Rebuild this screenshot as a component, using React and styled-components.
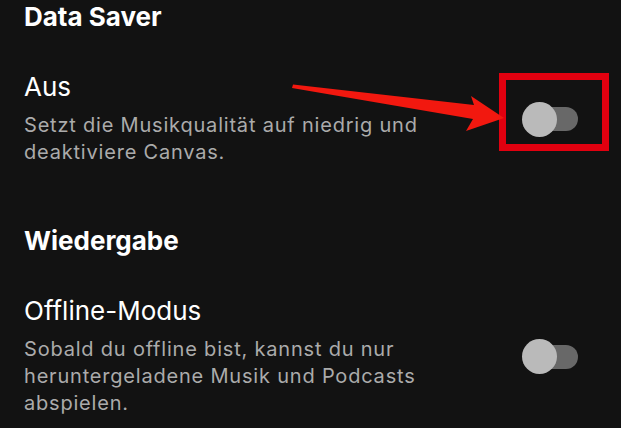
import React from "react";
import styled, { createGlobalStyle } from "styled-components";

const GlobalStyle = createGlobalStyle`
  html, body {
    margin: 0;
    padding: 0;
    background: #121212;
  }
  body {
    font-family: "Inter", "Noto Sans", sans-serif;
    -webkit-font-smoothing: antialiased;
  }
`;

function Toggle() {
  return (
    <Switch>
      <Track />
      <Knob />
    </Switch>
  );
}

function SettingRow({ title, description, highlight }) {
  return (
    <Row>
      <RowText>
        <RowTitle>{title}</RowTitle>
        <RowDescription>{description}</RowDescription>
      </RowText>
      <SwitchCell>
        <Toggle />
        {highlight && <HighlightBox />}
      </SwitchCell>
    </Row>
  );
}

export default function App() {
  return (
    <Page>
      <GlobalStyle />
      <Section>
        <SectionTitle>Data Saver</SectionTitle>
        <SettingRow
          title="Aus"
          description="Setzt die Musikqualität auf niedrig und deaktiviere Canvas."
          highlight
        />
      </Section>
      <Section>
        <SectionTitle>Wiedergabe</SectionTitle>
        <SettingRow
          title="Offline-Modus"
          description="Sobald du offline bist, kannst du nur heruntergeladene Musik und Podcasts abspielen."
        />
      </Section>

      {/* annotation arrow */}
      <Arrow width="621" height="428" viewBox="0 0 621 428">
        <polygon
          points="293,84.5 474,105 471,96 504,118 466,131 473,119 292,88"
          fill="#f2180f"
        />
      </Arrow>
    </Page>
  );
}

const Page = styled.div`
  position: relative;
  width: 621px;
  height: 428px;
  overflow: hidden;
  background: #121212;
  padding: 2px 43px 0 24px;
  box-sizing: border-box;
`;

const Section = styled.div`
  display: flex;
  flex-direction: column;
`;

const SectionTitle = styled.div`
  font-size: 26px;
  font-weight: 700;
  color: #ffffff;
  line-height: 30px;
  margin-bottom: 40px;
`;

const Row = styled.div`
  display: flex;
  align-items: center;
  justify-content: space-between;
  margin-bottom: 60px;
`;

const RowText = styled.div`
  display: flex;
  flex-direction: column;
  width: 405px;
`;

const RowTitle = styled.div`
  font-size: 26px;
  font-weight: 400;
  color: #ffffff;
  line-height: 30px;
  margin-bottom: 10px;
`;

const RowDescription = styled.div`
  font-size: 20px;
  letter-spacing: 0.8px;
  color: #ababab;
  line-height: 27px;
`;

const SwitchCell = styled.div`
  position: relative;
`;

const Switch = styled.div`
  position: relative;
  width: 56px;
  height: 35px;
`;

const Track = styled.div`
  position: absolute;
  left: 10px;
  top: 5.5px;
  width: 46px;
  height: 24px;
  border-radius: 12px;
  background: #686868;
`;

const Knob = styled.div`
  position: absolute;
  left: 0;
  top: 0;
  width: 35px;
  height: 35px;
  border-radius: 50%;
  background: #bababa;
`;

const HighlightBox = styled.div`
  position: absolute;
  left: -23px;
  top: -29px;
  width: 96px;
  height: 64px;
  border: 7px solid #e1000f;
`;

const Arrow = styled.svg`
  position: absolute;
  left: 0;
  top: 0;
  pointer-events: none;
`;
